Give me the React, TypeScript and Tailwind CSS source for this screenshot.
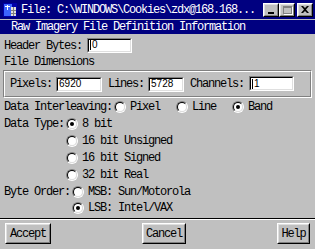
import React from 'react'

const mono = { fontFamily: '"Liberation Mono", "DejaVu Sans Mono", monospace' }

function Sunken({ w, value, caret }: { w: string; value: string; caret?: boolean }) {
  return (
    <span className={`${w} h-[15px] inline-flex border border-t-[#808080] border-l-[#808080] border-r-white border-b-white`}>
      <span className="flex-1 flex items-center border border-t-black border-l-black border-r-[#dfdfdf] border-b-[#dfdfdf] bg-white pl-[1px] font-['Liberation_Sans',Arial,sans-serif] text-[10px] tracking-normal text-black leading-none">
        {caret && <span className="w-px h-[10px] bg-black mr-px" />}
        {value}
      </span>
    </span>
  )
}

function Radio({ checked }: { checked?: boolean }) {
  return (
    <span className="w-[12px] h-[12px] shrink-0 rounded-full inline-flex border border-t-[#808080] border-l-[#808080] border-r-white border-b-white">
      <span className="flex-1 rounded-full flex items-center justify-center border border-t-black border-l-black border-r-[#dfdfdf] border-b-[#dfdfdf] bg-white">
        {checked && <span className="w-[4px] h-[4px] rounded-full bg-black" />}
      </span>
    </span>
  )
}

function Option({ label, checked }: { label: string; checked?: boolean }) {
  return (
    <span className="flex items-center gap-[4px]">
      <Radio checked={checked} />
      <span>{label}</span>
    </span>
  )
}

function Btn({ label, w }: { label: string; w: string }) {
  return (
    <button className={`${w} h-[21px] flex border border-t-white border-l-white border-r-black border-b-black bg-[#c0c0c0]`}>
      <span className="flex-1 flex items-center justify-center border border-t-[#dfdfdf] border-l-[#dfdfdf] border-r-[#808080] border-b-[#808080]">
        {label}
      </span>
    </button>
  )
}

function TitleBtn({ children }: { children: React.ReactNode }) {
  return (
    <span className="w-[16px] h-[14px] flex border border-t-white border-l-white border-r-black border-b-black bg-[#c0c0c0]">
      <span className="flex-1 flex items-center justify-center border border-t-[#dfdfdf] border-l-[#dfdfdf] border-r-[#808080] border-b-[#808080]">
        {children}
      </span>
    </span>
  )
}

export default function App() {
  return (
    <div className="w-[315px] h-[249px] overflow-hidden bg-[#c0c0c0] text-black text-[12px] leading-none tracking-[-1.2px]" style={mono}>
      {/* title bar */}
      <div className="h-[19px] bg-[#000080] flex items-center pl-[3px] pr-[2px] text-white">
        <svg width="14" height="14" viewBox="0 0 14 14" className="shrink-0">
          <rect x="0" y="0" width="14" height="14" fill="#0000a8" />
          <rect x="1" y="1" width="8" height="12" fill="#3c64ff" />
          <rect x="2" y="3" width="5" height="1" fill="#ffffff" />
          <rect x="4" y="2" width="1" height="5" fill="#ffffff" />
          <rect x="8" y="4" width="5" height="9" fill="#e0e0e0" />
          <rect x="10" y="4" width="1" height="9" fill="#808080" />
          <rect x="8" y="7" width="5" height="1" fill="#808080" />
          <rect x="8" y="10" width="5" height="1" fill="#808080" />
        </svg>
        <span className="ml-[4px] flex-1 whitespace-nowrap">File: C:\WINDOWS\Cookies\zdx@168.168...</span>
        <span className="flex">
          <TitleBtn>
            <span className="w-[6px] h-[2px] bg-black mt-[6px]" />
          </TitleBtn>
          <TitleBtn>
            <span className="w-[9px] h-[8px] border border-[#808080] border-t-2 shadow-[1px_1px_0_white]" />
          </TitleBtn>
          <span className="w-[2px]" />
          <TitleBtn>
            <svg width="8" height="7" viewBox="0 0 8 7">
              <path d="M0 0h2l2 2 2-2h2L5 3.5 8 7H6L4 5 2 7H0l3-3.5z" fill="black" />
            </svg>
          </TitleBtn>
        </span>
      </div>
      <div className="h-px bg-[#c0c0c0]" />
      <div className="h-[14px] bg-[#000080] text-white flex items-center pl-[11px] whitespace-nowrap">
        Raw Imagery File Definition Information
      </div>

      <div className="pl-[4px]">
        <div className="mt-[4px] h-[15px] flex items-center">
          <span>Header Bytes:</span>
          <span className="ml-[5px]"><Sunken w="w-[45px]" value="0" caret /></span>
        </div>

        <div className="mt-[3px] h-[12px] flex items-center">File Dimensions</div>
      </div>

      <div className="mx-[3px] mt-[2px] h-[28px] border border-t-[#808080] border-l-[#808080] border-r-white border-b-white">
        <div className="h-full border border-t-white border-l-white border-r-[#808080] border-b-[#808080] flex items-center pl-[5px]">
          <span>Pixels:</span>
          <span className="ml-[4px]"><Sunken w="w-[46px]" value="6920" /></span>
          <span className="ml-[6px]">Lines:</span>
          <span className="ml-[4px]"><Sunken w="w-[36px]" value="5728" /></span>
          <span className="ml-[6px]">Channels:</span>
          <span className="ml-[5px]"><Sunken w="w-[45px]" value="1" caret /></span>
        </div>
      </div>

      <div className="pl-[4px]">
        <div className="mt-[1px] h-[16px] flex items-center">
          <span className="mr-[2px]">Data Interleaving:</span>
          <span className="w-[62px]"><Option label="Pixel" /></span>
          <span className="w-[56px]"><Option label="Line" /></span>
          <Option label="Band" checked />
        </div>

        <div className="flex">
          <span className="h-[17px] flex items-center mr-[2px]">Data Type:</span>
          <div className="flex flex-col">
            <span className="h-[17px] flex items-center"><Option label="8 bit" checked /></span>
            <span className="h-[17px] flex items-center"><Option label="16 bit Unsigned" /></span>
            <span className="h-[17px] flex items-center"><Option label="16 bit Signed" /></span>
            <span className="h-[17px] flex items-center"><Option label="32 bit Real" /></span>
          </div>
        </div>

        <div className="flex mt-[1px]">
          <span className="h-[16px] flex items-center mr-[2px]">Byte Order:</span>
          <div className="flex flex-col">
            <span className="h-[16px] flex items-center"><Option label="MSB: Sun/Motorola" /></span>
            <span className="h-[16px] flex items-center"><Option label="LSB: Intel/VAX" checked /></span>
          </div>
        </div>
      </div>

      <div className="mt-[2px] h-px bg-black" />
      <div className="h-px bg-white" />

      <div className="mt-[3px] px-[5px] flex justify-between items-center">
        <Btn label="Accept" w="w-[46px]" />
        <Btn label="Cancel" w="w-[44px]" />
        <Btn label="Help" w="w-[33px]" />
      </div>
    </div>
  )
}
